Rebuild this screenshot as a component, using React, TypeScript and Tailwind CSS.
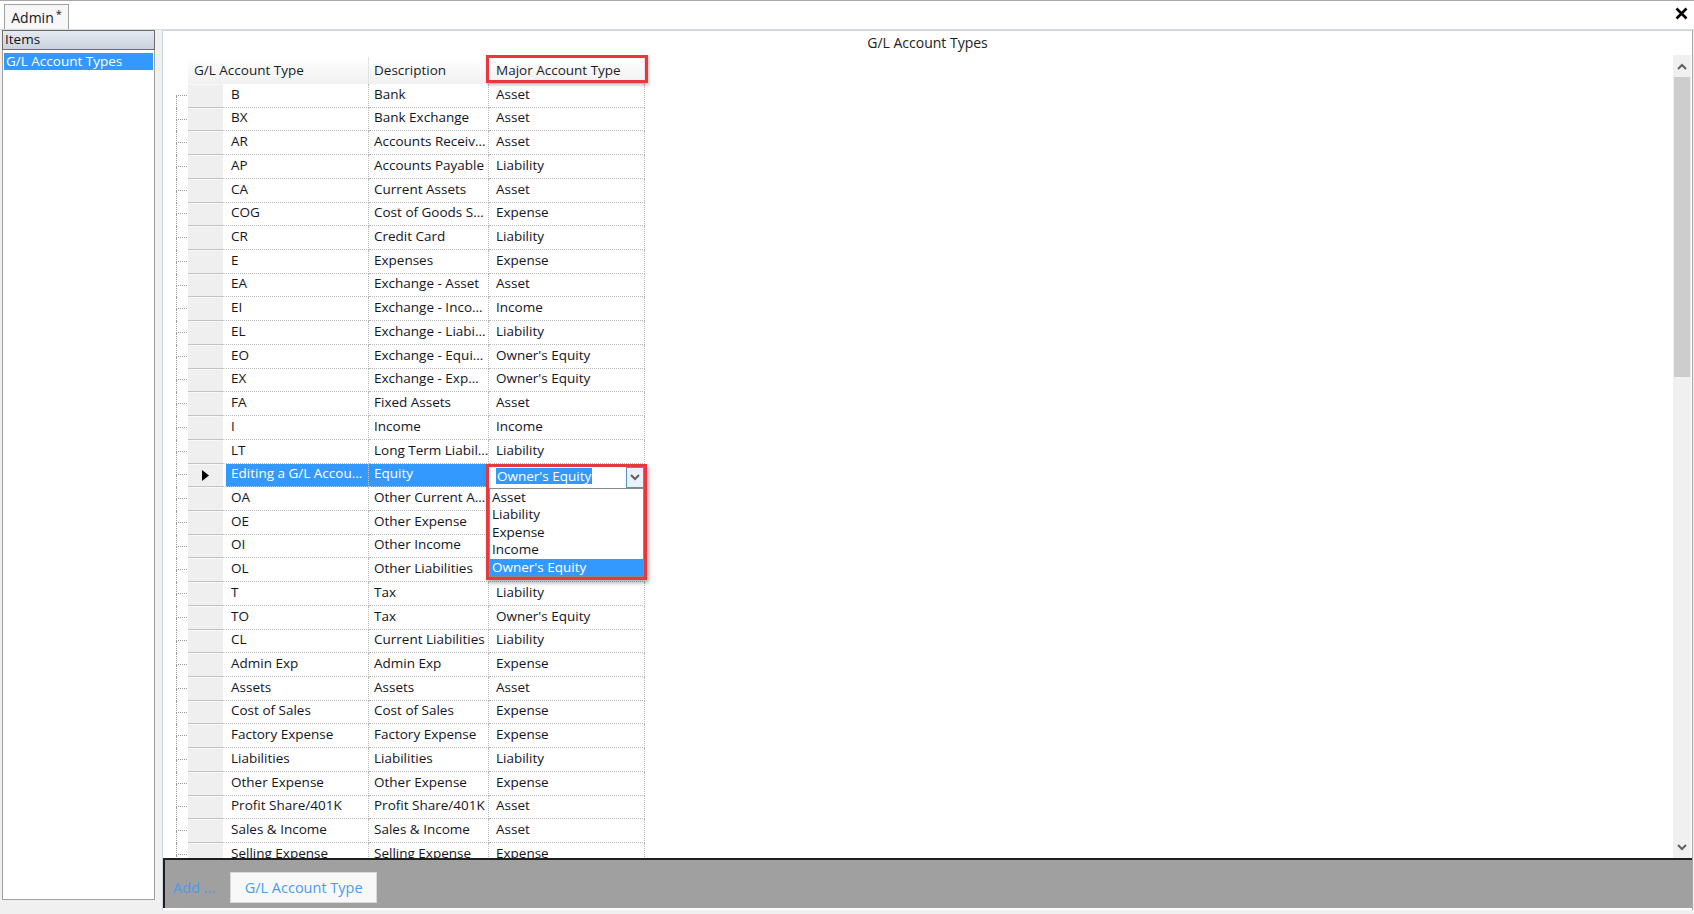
import React from "react";

const rows: [string, string, string][] = [
  ["B", "Bank", "Asset"],
  ["BX", "Bank Exchange", "Asset"],
  ["AR", "Accounts Receiv…", "Asset"],
  ["AP", "Accounts Payable", "Liability"],
  ["CA", "Current Assets", "Asset"],
  ["COG", "Cost of Goods S…", "Expense"],
  ["CR", "Credit Card", "Liability"],
  ["E", "Expenses", "Expense"],
  ["EA", "Exchange - Asset", "Asset"],
  ["EI", "Exchange - Inco…", "Income"],
  ["EL", "Exchange - Liabi…", "Liability"],
  ["EO", "Exchange - Equi…", "Owner's Equity"],
  ["EX", "Exchange - Exp…", "Owner's Equity"],
  ["FA", "Fixed Assets", "Asset"],
  ["I", "Income", "Income"],
  ["LT", "Long Term Liabil…", "Liability"],
  ["Editing a G/L Accou…", "Equity", ""],
  ["OA", "Other Current A…", ""],
  ["OE", "Other Expense", ""],
  ["OI", "Other Income", ""],
  ["OL", "Other Liabilities", ""],
  ["T", "Tax", "Liability"],
  ["TO", "Tax", "Owner's Equity"],
  ["CL", "Current Liabilities", "Liability"],
  ["Admin Exp", "Admin Exp", "Expense"],
  ["Assets", "Assets", "Asset"],
  ["Cost of Sales", "Cost of Sales", "Expense"],
  ["Factory Expense", "Factory Expense", "Expense"],
  ["Liabilities", "Liabilities", "Liability"],
  ["Other Expense", "Other Expense", "Expense"],
  ["Profit Share/401K", "Profit Share/401K", "Asset"],
  ["Sales & Income", "Sales & Income", "Asset"],
  ["Selling Expense", "Selling Expense", "Expense"],
];

function Chevron({ up }: { up?: boolean }) {
  return (
    <svg width="10" height="7" viewBox="0 0 10 7">
      <path
        d={up ? "M1 6 L5 2 L9 6" : "M1 1 L5 5 L9 1"}
        fill="none"
        stroke="#606060"
        strokeWidth="2"
      />
    </svg>
  );
}

function Row({ r, i }: { r: [string, string, string]; i: number }) {
  const editing = i === 16;
  return (
    <div className="flex h-[23.72px] shrink-0">
      <div className="w-[25px] shrink-0 flex flex-col">
        <div
          className={
            i === 0
              ? "h-1/2 ml-[13px] w-[11px] border-b border-dotted border-[#9a9a9a]"
              : "h-1/2 ml-[13px] w-[11px] border-b border-l border-dotted border-[#9a9a9a]"
          }
        />
        <div className="h-1/2 ml-[13px] border-l border-dotted border-[#9a9a9a]" />
      </div>
      <div className="w-[38px] shrink-0 bg-[#efefef] border-t border-t-[#f8f8f8] border-b border-b-[#c2c2c2] border-r-[3px] border-r-white flex items-center justify-center">
        {editing && (
          <svg width="7" height="11" viewBox="0 0 7 11">
            <path d="M0 0 L7 5.5 L0 11 Z" fill="#000" />
          </svg>
        )}
      </div>
      <div
        className={
          editing
            ? "w-[143px] shrink-0 bg-[#3399ff] text-white border-r border-b border-dotted border-[#a9cdf5] pl-[5px] pb-[3px] flex items-center whitespace-nowrap overflow-hidden"
            : "w-[143px] shrink-0 border-r border-b border-dotted border-[#b8b8b8] pl-[5px] pb-[3px] flex items-center whitespace-nowrap overflow-hidden"
        }
      >
        {r[0]}
      </div>
      <div
        className={
          editing
            ? "w-[120px] shrink-0 bg-[#3399ff] text-white border-r border-b border-dotted border-[#a9cdf5] pl-[5px] pb-[3px] flex items-center whitespace-nowrap overflow-hidden"
            : "w-[120px] shrink-0 border-r border-b border-dotted border-[#b8b8b8] pl-[5px] pb-[3px] flex items-center whitespace-nowrap overflow-hidden"
        }
      >
        {r[1]}
      </div>
      <div className="w-[156px] shrink-0 border-r border-b border-dotted border-[#b8b8b8] pl-[7px] pb-[3px] flex items-center whitespace-nowrap overflow-hidden">
        {r[2]}
      </div>
    </div>
  );
}

export default function App() {
  return (
    <div className="w-[1694px] h-[914px] overflow-hidden bg-[#f0f0f0] flex flex-col font-['Open_Sans',sans-serif] text-[13.5px] text-[#14141e]">
      {/* top tab strip */}
      <div className="h-[30px] shrink-0 bg-white border-t border-[#a8a8a8] border-b border-b-[#d4dbe2] flex items-end justify-between">
        <div className="ml-[4px] h-[25px] w-[65px] border border-[#a0a0a0] border-b-0 bg-[#f7f7f7] flex items-center justify-center text-[14px]">
          Admin<span className="ml-[2px] -mt-[6px] text-[11px]">*</span>
        </div>
        <div className="mr-[6px] mb-[9px]">
          <svg width="13" height="13" viewBox="0 0 13 13">
            <path d="M1.5 1.5 L11.5 11.5 M11.5 1.5 L1.5 11.5" stroke="#000" strokeWidth="2.6" />
          </svg>
        </div>
      </div>

      {/* body */}
      <div className="flex-1 flex">
        {/* left panel */}
        <div className="ml-[2px] w-[153px] h-[870px] shrink-0 flex flex-col">
          <div className="h-[20px] shrink-0 border border-[#6c6c6c] bg-gradient-to-b from-[#e4eaf1] to-[#c8d3df] pl-[2px] flex items-center leading-none">
            Items
          </div>
          <div className="flex-1 bg-white border border-[#a0a0a0] border-t-0 pt-[3px] px-[1px]">
            <div className="h-[17px] bg-[#3399ff] text-white pl-[2px] flex items-center leading-none">
              G/L Account Types
            </div>
          </div>
        </div>

        {/* main panel */}
        <div className="ml-[7px] w-[1531px] h-[880px] shrink-0 bg-white border-l border-t border-[#ccd5de] border-r border-r-[#a8a8a8] flex flex-col">
          <div className="h-[24px] shrink-0 flex items-center justify-center text-[14px] text-[#222] pb-[2px]">
            G/L Account Types
          </div>
          <div className="h-[803px] shrink-0 flex">
            {/* grid area */}
            <div className="relative flex-1 overflow-hidden pt-[2px]">
              <div className="flex h-[27px] ml-[25px] text-[#1c1c28]">
                <div className="w-[181px] shrink-0 bg-gradient-to-b from-white to-[#f1f1f1] border-r border-[#e2e2e2] pl-[6px] flex items-center">
                  G/L Account Type
                </div>
                <div className="w-[120px] shrink-0 bg-gradient-to-b from-white to-[#f1f1f1] border-r border-[#e2e2e2] pl-[5px] flex items-center">
                  Description
                </div>
                <div className="w-[156px] shrink-0 bg-gradient-to-b from-white to-[#f1f1f1] border-r border-[#e2e2e2] pl-[7px] flex items-center">
                  Major Account Type
                </div>
              </div>
              {rows.map((r, i) => (
                <Row key={i} r={r} i={i} />
              ))}

              {/* header highlight box */}
              <div className="absolute left-[323px] top-[0px] w-[162px] h-[28px] border-[3px] border-[#e8383e] shadow-[1px_2px_3px_rgba(0,0,0,0.25)]" />

              {/* dropdown editor */}
              <div className="absolute left-[323px] top-[409px] w-[161px] border-[3px] border-[#e8383e] bg-white shadow-[2px_3px_4px_rgba(0,0,0,0.3)] flex flex-col">
                <div className="h-[21px] flex items-stretch">
                  <div className="flex-1 flex items-start pt-[1px] pl-[7px]">
                    <span className="bg-[#3399ff] text-white leading-[16px] px-[1px]">Owner's Equity</span>
                  </div>
                  <div className="w-[18px] border border-[#5c8fc4] bg-[#eaf3fb] flex items-center justify-center">
                    <Chevron />
                  </div>
                </div>
                <div className="border border-[#8a8a8a] flex flex-col leading-none">
                  <div className="h-[17.4px] pl-[2px] flex items-center">Asset</div>
                  <div className="h-[17.4px] pl-[2px] flex items-center">Liability</div>
                  <div className="h-[17.4px] pl-[2px] flex items-center">Expense</div>
                  <div className="h-[17.4px] pl-[2px] flex items-center">Income</div>
                  <div className="h-[17.4px] pl-[2px] flex items-center bg-[#3399ff] text-white">Owner's Equity</div>
                </div>
              </div>
            </div>
            {/* scrollbar */}
            <div className="w-[18px] shrink-0 mr-[1px] flex flex-col bg-[#f0f0f0]">
              <div className="h-[22px] flex items-center justify-center">
                <Chevron up />
              </div>
              <div className="h-[300px] mx-[1px] bg-[#cdcdcd]" />
              <div className="flex-1" />
              <div className="h-[22px] flex items-center justify-center">
                <Chevron />
              </div>
            </div>
          </div>
          {/* footer */}
          <div className="h-[50px] shrink-0 bg-[#a0a0a0] border-t-2 border-l-2 border-[#1e1e1e] flex items-center pt-[7px]">
            <div className="ml-[8px] text-[14.5px] text-[#4a9bef]">Add ...</div>
            <div className="ml-[15px] w-[147px] h-[31px] bg-[#f8f8f8] border border-[#d8d8d8] flex items-center justify-center text-[14.5px] text-[#4a9bef]">
              G/L Account Type
            </div>
          </div>
        </div>
      </div>
    </div>
  );
}
